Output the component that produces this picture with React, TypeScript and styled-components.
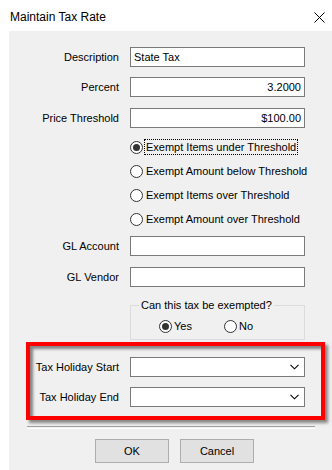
import styled, { createGlobalStyle } from 'styled-components'

// global
const GlobalStyle = createGlobalStyle`
  html, body {
    margin: 0;
    padding: 0;
    background: #ffffff;
  }
  body {
    font-family: 'Liberation Sans', Arial, sans-serif;
    font-size: 11px;
    color: #000000;
  }
`

// styled
const Window = styled.div`
  display: flex;
  flex-direction: column;
  width: 332px;
  height: 470px;
  background: #ffffff;
  overflow: hidden;
`
const TitleBar = styled.div`
  display: flex;
  justify-content: space-between;
  align-items: center;
  height: 31px;
  padding: 0 7px 0 10px;
  box-sizing: border-box;
`
const Title = styled.span`
  font-size: 12px;
  margin-top: 3px;
`
const CloseIcon = styled.svg`
  width: 11px;
  height: 11px;
  margin-top: 4px;
`
const Panel = styled.div`
  flex: 1;
  display: flex;
  flex-direction: column;
  margin-left: 9px;
  padding-top: 16px;
  background: #f0f0f0;
`
const Row = styled.div<{ $top: number; $labelWidth?: number }>`
  display: flex;
  align-items: center;
  height: 20px;
  margin-top: ${({ $top }) => $top}px;
  & > label {
    width: ${({ $labelWidth }) => $labelWidth ?? 110}px;
  }
`
const Label = styled.label`
  flex-shrink: 0;
  margin-right: 11px;
  text-align: right;
  white-space: nowrap;
`
const TextBox = styled.div<{ $align?: string }>`
  display: flex;
  align-items: center;
  justify-content: ${({ $align }) => ($align === 'right' ? 'flex-end' : 'flex-start')};
  width: 175px;
  height: 20px;
  padding: 0 3px;
  box-sizing: border-box;
  background: #ffffff;
  border: 1px solid #7a7a7a;
  white-space: nowrap;
`
const ComboBox = styled(TextBox)`
  justify-content: flex-end;
  padding-right: 5px;
`
const Chevron = styled.svg`
  width: 9px;
  height: 6px;
`
const RadioList = styled.div`
  display: flex;
  flex-direction: column;
  margin: 7px 0 0 121px;
`
const RadioRow = styled.div`
  display: flex;
  align-items: center;
  height: 24px;
`
const RadioOption = styled.div<{ $gap?: number }>`
  display: flex;
  align-items: center;
  margin-right: ${({ $gap }) => $gap ?? 0}px;
`
const RadioCircle = styled.span<{ $checked?: boolean }>`
  position: relative;
  width: 13px;
  height: 13px;
  box-sizing: border-box;
  border: 1px solid #333333;
  border-radius: 50%;
  background: #ffffff;
  margin-right: 2px;
  flex-shrink: 0;
  &::after {
    content: '';
    display: ${({ $checked }) => ($checked ? 'block' : 'none')};
    position: absolute;
    left: 2px;
    top: 2px;
    width: 7px;
    height: 7px;
    border-radius: 50%;
    background: #333333;
  }
`
const RadioText = styled.span<{ $focused?: boolean }>`
  padding: 1px 1px;
  white-space: nowrap;
  outline: ${({ $focused }) => ($focused ? '1px dotted #000000' : 'none')};
`
const GroupBox = styled.fieldset`
  width: 175px;
  min-width: 0;
  box-sizing: border-box;
  margin: 11px 0 0 121px;
  padding: 5px 0 5px 8px;
  border: 1px solid #dcdcdc;
`
const Legend = styled.legend`
  padding: 0 2px;
  line-height: 15px;
`
const YesNoRow = styled.div`
  display: flex;
  align-items: center;
  height: 16px;
  padding-left: 20px;
`
const Highlight = styled.div`
  display: flex;
  flex-direction: column;
  width: 299px;
  box-sizing: border-box;
  margin: 2px 0 0 17px;
  padding: 11px 0 9px;
  border: 4px solid #ff0000;
  box-shadow: 3px 3px 3px rgba(0, 0, 0, 0.45),
    inset 3px 3px 3px rgba(0, 0, 0, 0.45);
`
const Separator = styled.div`
  width: 288px;
  height: 1px;
  margin: 6px 0 0 18px;
  border-top: 1px solid #a0a0a0;
  border-bottom: 1px solid #ffffff;
`
const ButtonBar = styled.div`
  display: flex;
  gap: 11px;
  margin: 10px 0 0 86px;
`
const Button = styled.div`
  display: flex;
  justify-content: center;
  align-items: center;
  width: 74px;
  height: 24px;
  box-sizing: border-box;
  background: #e1e1e1;
  border: 1px solid #adadad;
`

// data
const exemptOptions = [
  'Exempt Items under Threshold',
  'Exempt Amount below Threshold',
  'Exempt Items over Threshold',
  'Exempt Amount over Threshold',
]

// components
function DropDown() {
  return (
    <ComboBox>
      <Chevron viewBox="0 0 9 6">
        <polyline points="0.5,0.8 4.5,4.8 8.5,0.8" fill="none" stroke="#000" strokeWidth="1.1" />
      </Chevron>
    </ComboBox>
  )
}

function App() {
  return (
    <>
      <GlobalStyle />
      <Window>
        <TitleBar>
          <Title>Maintain Tax Rate</Title>
          <CloseIcon viewBox="0 0 11 11">
            <path d="M0.5 0.5 L10.5 10.5 M10.5 0.5 L0.5 10.5" stroke="#000" strokeWidth="1" />
          </CloseIcon>
        </TitleBar>
        <Panel>
          <Row $top={0}>
            <Label>Description</Label>
            <TextBox>State Tax</TextBox>
          </Row>
          <Row $top={10}>
            <Label>Percent</Label>
            <TextBox $align="right">3.2000</TextBox>
          </Row>
          <Row $top={11}>
            <Label>Price Threshold</Label>
            <TextBox $align="right">$100.00</TextBox>
          </Row>
          <RadioList>
            {exemptOptions.map((option, i) => (
              <RadioRow key={option}>
                <RadioCircle $checked={i === 0} />
                <RadioText $focused={i === 0}>{option}</RadioText>
              </RadioRow>
            ))}
          </RadioList>
          <Row $top={5}>
            <Label>GL Account</Label>
            <TextBox />
          </Row>
          <Row $top={11}>
            <Label>GL Vendor</Label>
            <TextBox />
          </Row>
          <GroupBox>
            <Legend>Can this tax be exempted?</Legend>
            <YesNoRow>
              <RadioOption $gap={32}>
                <RadioCircle $checked />
                <span>Yes</span>
              </RadioOption>
              <RadioOption>
                <RadioCircle />
                <span>No</span>
              </RadioOption>
            </YesNoRow>
          </GroupBox>
          <Highlight>
            <Row $top={0} $labelWidth={89}>
              <Label>Tax Holiday Start</Label>
              <DropDown />
            </Row>
            <Row $top={10} $labelWidth={89}>
              <Label>Tax Holiday End</Label>
              <DropDown />
            </Row>
          </Highlight>
          <Separator />
          <ButtonBar>
            <Button>OK</Button>
            <Button>Cancel</Button>
          </ButtonBar>
        </Panel>
      </Window>
    </>
  )
}

export default App
